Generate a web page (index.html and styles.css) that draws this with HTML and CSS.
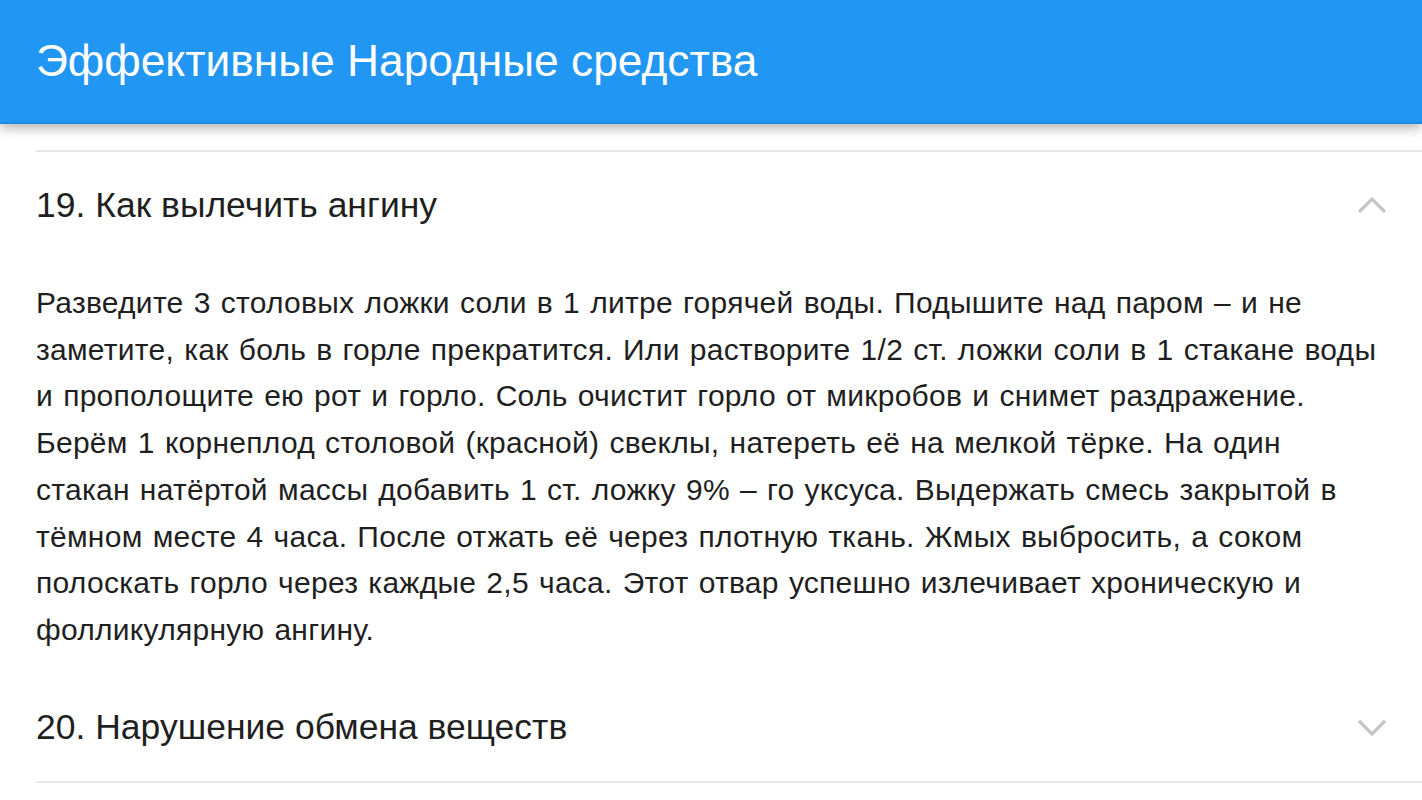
FILE: index.html
```html
<!DOCTYPE html>
<html lang="ru">
<head>
<meta charset="utf-8">
<title>Эффективные Народные средства</title>
<link rel="stylesheet" href="styles.css">
</head>
<body>
<header class="app-bar">
  <h1 class="app-title">Эффективные Народные средства</h1>
</header>
<main class="list">
  <section class="item open">
    <div class="item-head">
      <h2 class="item-title">19. Как вылечить ангину</h2>
      <svg class="chevron" width="30" height="18" viewBox="0 0 30 18"><path d="M2 16 L15 3 L28 16" fill="none" stroke="#c6c6ca" stroke-width="3.2"/></svg>
    </div>
    <p class="item-body">Разведите 3 столовых ложки соли в 1 литре горячей воды. Подышите над паром – и не заметите, как боль в горле прекратится. Или растворите 1/2 ст. ложки соли в 1 стакане воды и прополощите ею рот и горло. Соль очистит горло от микробов и снимет раздражение. Берём 1 корнеплод столовой (красной) свеклы, натереть её на мелкой тёрке. На один стакан натёртой массы добавить 1 ст. ложку 9% – го уксуса. Выдержать смесь закрытой в тёмном месте 4 часа. После отжать её через плотную ткань. Жмых выбросить, а соком полоскать горло через каждые 2,5 часа. Этот отвар успешно излечивает хроническую и фолликулярную ангину.</p>
  </section>
  <section class="item">
    <div class="item-head">
      <h2 class="item-title">20. Нарушение обмена веществ</h2>
      <svg class="chevron" width="30" height="18" viewBox="0 0 30 18"><path d="M2 2 L15 15 L28 2" fill="none" stroke="#c6c6ca" stroke-width="3.2"/></svg>
    </div>
  </section>
</main>
</body>
</html>
```
FILE: styles.css
```css
* { box-sizing: border-box; }
html, body { margin: 0; padding: 0; }
body {
  font-family: "Liberation Sans", Arial, Helvetica, sans-serif;
  background: #fff;
  color: #1f1f1f;
  overflow: hidden;
  height: 800px;
}
.app-bar {
  height: 124px;
  background: #2196f3;
  border-bottom: 2px solid #1e88e5;
  box-shadow: 0 3px 12px rgba(0, 0, 0, 0.35);
  display: flex;
  align-items: center;
  padding: 0 36px;
  position: relative;
  z-index: 1;
}
.app-title {
  margin: 0;
  color: #fff;
  font-weight: normal;
  font-size: 44.3px;
  padding-bottom: 1px;
}
.list {
  margin: 26px 0 0 36px;
  border-top: 2px solid #e6e6e6;
}
.item { border-bottom: 2px solid #e6e6e6; }
.item.open { border-bottom: none; }
.item-head {
  height: 106px;
  display: flex;
  align-items: center;
  justify-content: space-between;
  padding-right: 35px;
}
.item-title {
  margin: 0;
  font-weight: normal;
  font-size: 35.5px;
}
.item-body {
  margin: 0;
  padding: 22px 42px 21px 0;
  font-size: 30px;
  letter-spacing: 0.27px;
  word-spacing: 1.5px;
  line-height: 46.7px;
}
```
